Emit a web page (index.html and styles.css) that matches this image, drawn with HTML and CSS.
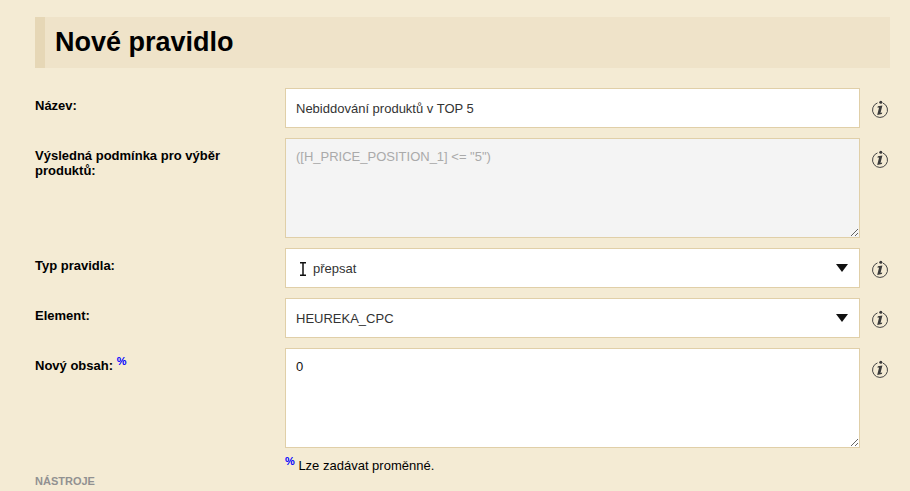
FILE: index.html
```html
<!DOCTYPE html>
<html>
<head>
    <title>Nové pravidlo</title>
    <link rel="stylesheet" href="styles.css">
</head>
<body>
    <h1 class="page-title">Nové pravidlo</h1>

    <!-- Formular pravidla -->
    <div class="form">
        <div class="row">
            <label class="label">Název:</label>
            <input class="field field-input" type="text" value="Nebiddování produktů v TOP 5">
            <svg class="info" viewBox="0 0 18 20"><use href="#info-icon"></use></svg>
        </div>
        <div class="row">
            <label class="label">Výsledná podmínka pro výběr produktů:</label>
            <textarea class="field field-area field-disabled" readonly>([H_PRICE_POSITION_1] &lt;= "5")</textarea>
            <svg class="info" viewBox="0 0 18 20"><use href="#info-icon"></use></svg>
        </div>
        <div class="row">
            <label class="label">Typ pravidla:</label>
            <div class="field field-select">
                <svg class="ibeam" viewBox="0 0 6 14"><path d="M0 .8h6M0 13.2h6M3 .8v12.4" fill="none" stroke="#111" stroke-width="1.5"/></svg>
                <span>přepsat</span>
                <span class="arrow"></span>
            </div>
            <svg class="info" viewBox="0 0 18 20"><use href="#info-icon"></use></svg>
        </div>
        <div class="row">
            <label class="label">Element:</label>
            <div class="field field-select">
                <span>HEUREKA_CPC</span>
                <span class="arrow"></span>
            </div>
            <svg class="info" viewBox="0 0 18 20"><use href="#info-icon"></use></svg>
        </div>
        <div class="row">
            <label class="label">Nový obsah: <sup class="var">%</sup></label>
            <textarea class="field field-area field-dark">0</textarea>
            <svg class="info" viewBox="0 0 18 20"><use href="#info-icon"></use></svg>
        </div>
        <p class="note"><sup class="var">%</sup> Lze zadávat proměnné.</p>
    </div>

    <h2 class="tools">NÁSTROJE</h2>

    <!-- Ikona napovedy -->
    <svg class="defs" width="0" height="0">
        <symbol id="info-icon" viewBox="0 0 18 20">
            <path d="M10.8 5A7.5 7.5 0 1 1 5.5 4.9" fill="none" stroke="#444" stroke-width="1"/>
            <circle cx="8.8" cy="4.2" r="1.5" fill="#3a3a3a"/>
            <path d="M5.8 8.2L10.4 7.4 8.5 15 10.2 14.5 9.8 16 5.2 16.9 7.1 9.6 5.5 9.8Z" fill="#3a3a3a"/>
        </symbol>
    </svg>
</body>
</html>
```

FILE: styles.css
```css
body {
    font-family: "Liberation Sans", Arial, sans-serif;
    font-size: 13px;
    background-color: #f4ebd4;
    color: #000;
    margin: 0;
    padding: 17px 20px 0 35px;
    height: 491px;
    box-sizing: border-box;
    overflow: hidden;
}

.page-title {
    font-size: 27px;
    line-height: 31px;
    margin: 0 0 20px;
    padding: 10px;
    background-color: #efe3c9;
    border-left: 10px solid #e6d7b6;
}

.form {
    display: flex;
    flex-direction: column;
    gap: 10px;
}

.row {
    display: flex;
    align-items: flex-start;
}

.label {
    width: 250px;
    flex: none;
    font-weight: bold;
    line-height: 15px;
    padding: 10px 30px 0 0;
    box-sizing: border-box;
}

.var {
    color: #0000ff;
    font-size: 11px;
    font-weight: bold;
    line-height: 0;
}

.field {
    width: 575px;
    flex: none;
    box-sizing: border-box;
    margin: 0;
    padding: 0 10px;
    border: 1px solid #e0cfa8;
    border-radius: 0;
    outline: none;
    background-color: #fff;
    color: #333;
    font-family: "Liberation Sans", Arial, sans-serif;
    font-size: 13px;
}

.field-input {
    height: 40px;
}

.field-area {
    display: block;
    height: 100px;
    padding: 10px;
    line-height: 15px;
}

.field-disabled {
    background-color: #f4f4f4;
    color: #aaa;
}

.field-dark {
    color: #111;
}

.field-select {
    height: 40px;
    display: flex;
    align-items: center;
}

.ibeam {
    width: 6px;
    height: 14px;
    margin: 1px 7px 0 4px;
}

.arrow {
    margin-left: auto;
    margin-right: 1px;
    border-left: 6.5px solid transparent;
    border-right: 6.5px solid transparent;
    border-top: 8.5px solid #111;
}

.info {
    width: 18px;
    height: 20px;
    flex: none;
    margin: 10px 0 0 12px;
}

.note {
    margin: -2px 0 0 250px;
    line-height: 19px;
}

.tools {
    font-size: 11px;
    line-height: 13px;
    margin: 0;
    color: #919191;
}

.defs {
    position: absolute;
}
```
